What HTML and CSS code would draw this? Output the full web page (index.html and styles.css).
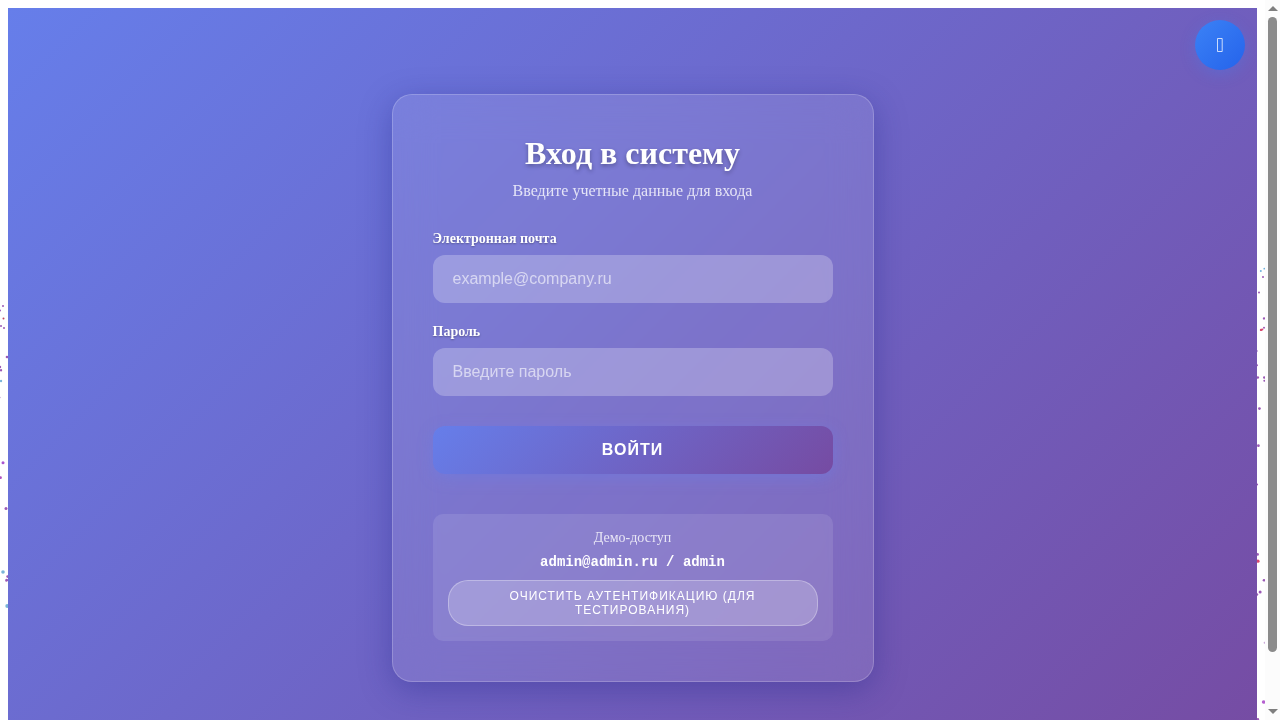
FILE: index.html
```html
<!DOCTYPE html>
<html lang="ru">
<head>
<meta charset="utf-8">
<meta name="viewport" content="width=device-width, initial-scale=1">
<title>Вход в систему</title>
<link rel="stylesheet" href="styles.css">
</head>
<body>
<svg class="particles particles-left" width="8" height="720" viewBox="0 0 8 720" aria-hidden="true">
  <g fill="#9b59b6">
    <circle cx="3" cy="306" r="1"/><circle cx="0" cy="310.5" r="1"/><circle cx="1" cy="326" r="1"/><circle cx="4" cy="328" r="1"/>
    <circle cx="7" cy="357" r="1.3"/><circle cx="0" cy="367" r="1.2"/><circle cx="1" cy="370.3" r="1.2"/>
    <circle cx="0" cy="397.5" r=".7" opacity=".6"/><circle cx="3" cy="462.7" r="1.5" fill="#a855d0"/><circle cx="0.5" cy="477.7" r="1.4" fill="#b052c0"/>
    <circle cx="6" cy="508.5" r="1.5"/><circle cx="7.6" cy="576.6" r="1.3"/><circle cx="6.6" cy="580.2" r="1.5"/>
  </g>
  <circle cx="3.5" cy="318.5" r="1" fill="#c0455f"/>
  <g fill="#7ab4d8"><circle cx="1" cy="381" r="1.2"/><circle cx="3" cy="572" r="1.8"/><circle cx="7.2" cy="606" r="1.9"/></g>
</svg>
<svg class="particles particles-right" width="8" height="720" viewBox="1257 0 8 720" aria-hidden="true">
  <g fill="#9b59b6">
    <circle cx="1263" cy="277" r="1"/><circle cx="1259" cy="292.6" r="1"/><circle cx="1264" cy="318.4" r="1.2"/><circle cx="1264" cy="327.8" r="1"/>
    <circle cx="1257" cy="351" r=".8"/><circle cx="1257" cy="365.3" r="1"/><circle cx="1257.8" cy="377.5" r="1.3"/><circle cx="1264.2" cy="377.5" r="1.2"/>
    <circle cx="1264.3" cy="380.7" r="1"/><circle cx="1259.4" cy="408.6" r="1.4"/><circle cx="1258.4" cy="445.7" r="1.4"/><circle cx="1257" cy="484.5" r="1.1"/>
    <circle cx="1257.6" cy="554.4" r="1.3"/><circle cx="1264" cy="580.2" r="1.3"/><circle cx="1260.1" cy="592" r="1.5"/><circle cx="1257" cy="594.5" r="1.2"/>
    <circle cx="1264.6" cy="642.8" r="1" opacity=".5"/><circle cx="1263.6" cy="702" r="1.8" fill="#b560d0"/><circle cx="1257.8" cy="719.4" r="1.4"/>
  </g>
  <g fill="#d9486f"><circle cx="1261" cy="329.9" r="1.2"/><circle cx="1262.3" cy="329.5" r="1.1"/><circle cx="1258" cy="561.2" r="1.6"/></g>
  <g fill="#6fb2dd"><circle cx="1260.8" cy="271" r="1"/><circle cx="1264.3" cy="268.7" r=".9"/></g>
</svg>

<button class="theme-toggle" type="button" aria-label="Сменить тему">
  <svg width="6" height="14" viewBox="0 0 6 14" aria-hidden="true">
    <path d="M.5 .5h4.7v13H.5z" fill="none" stroke="#fff" stroke-opacity=".75"/>
  </svg>
</button>

<main class="login-page">
  <section class="login-card">
    <header class="login-header">
      <h1>Вход в систему</h1>
      <p>Введите учетные данные для входа</p>
    </header>
    <form>
      <div class="form-group">
        <label for="email">Электронная почта</label>
        <input type="email" id="email" placeholder="example@company.ru">
      </div>
      <div class="form-group">
        <label for="password">Пароль</label>
        <input type="password" id="password" placeholder="Введите пароль">
      </div>
      <button class="login-button" type="button">Войти</button>
    </form>
    <div class="demo">
      <p class="demo-title">Демо-доступ</p>
      <p class="demo-credentials">admin@admin.ru / admin</p>
      <button class="clear-button" type="button">Очистить аутентификацию (для тестирования)</button>
    </div>
  </section>
</main>

<div class="scrollbar" aria-hidden="true">
  <svg width="10" height="5" viewBox="0 0 10 5"><path d="M0 5 5 0l5 5z" fill="#7f7f7f"/></svg>
  <div class="scrollbar-track"><div class="scrollbar-thumb"></div></div>
  <svg width="10" height="5" viewBox="0 0 10 5"><path d="M0 0h10L5 5z" fill="#7f7f7f"/></svg>
</div>
</body>
</html>
```

FILE: styles.css
```css
:root {
  --scrollbar-width: 15px;
}

html {
  scrollbar-width: none;
}

body {
  margin: 8px;
  padding-right: var(--scrollbar-width);
  background: #fff;
  font-family: "Liberation Serif", serif;
}

.particles {
  position: fixed;
  top: 0;
  z-index: -1;
}

.particles-left { left: 0; }
.particles-right { right: var(--scrollbar-width); }

.scrollbar {
  position: fixed;
  top: 0;
  right: 0;
  bottom: 0;
  z-index: 20;
  display: flex;
  flex-direction: column;
  align-items: center;
  gap: 6px;
  box-sizing: border-box;
  width: var(--scrollbar-width);
  padding: 6px 0;
  background: #fcfcfc;
}

.scrollbar-track {
  flex: 1;
  width: 9px;
}

.scrollbar-thumb {
  height: 92.5%;
  border-radius: 5px;
  background: #8b8b8b;
}

.theme-toggle {
  position: fixed;
  top: 20px;
  right: calc(20px + var(--scrollbar-width));
  z-index: 10;
  display: flex;
  align-items: center;
  justify-content: center;
  width: 50px;
  height: 50px;
  padding: 0;
  border: 0;
  border-radius: 50%;
  background: linear-gradient(135deg, #3b82f6, #2563eb);
  box-shadow: 0 4px 15px rgba(59, 130, 246, 0.3);
  color: #fff;
}

.login-page {
  display: flex;
  align-items: center;
  justify-content: center;
  min-height: 100vh;
  padding: 20px;
  background: linear-gradient(135deg, #667eea 0%, #764ba2 100%);
}

.login-card {
  width: 100%;
  max-width: 400px;
  padding: 40px;
  border: 1px solid rgba(255, 255, 255, 0.2);
  border-radius: 20px;
  background: rgba(255, 255, 255, 0.1);
  backdrop-filter: blur(20px);
  box-shadow: 0 8px 32px rgba(31, 38, 135, 0.37);
}

.login-header {
  margin-bottom: 30px;
  text-align: center;
}

.login-header h1 {
  margin: 0 0 10px;
  color: #fff;
  font-size: 32px;
  line-height: 37px;
  text-shadow: 0 2px 4px rgba(0, 0, 0, 0.3);
}

.login-header p {
  margin: 0;
  color: rgba(255, 255, 255, 0.8);
  font-size: 16px;
  line-height: 18px;
}

.form-group {
  margin-bottom: 20px;
}

.form-group label {
  display: block;
  margin-bottom: 8px;
  color: #fff;
  font-size: 14px;
  font-weight: 600;
  line-height: 17px;
  text-shadow: 0 1px 2px rgba(0, 0, 0, 0.3);
}

.form-group input {
  display: block;
  box-sizing: border-box;
  width: 100%;
  height: 48px;
  padding: 15px 20px;
  border: 0;
  border-radius: 12px;
  outline: 0;
  background: rgba(255, 255, 255, 0.25);
  color: #fff;
  font: 16px "Liberation Sans", sans-serif;
}

.form-group input::placeholder {
  color: rgba(255, 255, 255, 0.6);
}

.login-button {
  display: block;
  width: 100%;
  height: 48px;
  margin: 30px 0 40px;
  padding: 0;
  border: 0;
  border-radius: 12px;
  background: linear-gradient(135deg, #667eea 0%, #764ba2 100%);
  box-shadow: 0 4px 15px rgba(102, 126, 234, 0.4);
  color: #fff;
  font: 600 16px "Liberation Sans", sans-serif;
  letter-spacing: 1px;
  text-transform: uppercase;
}

.demo {
  padding: 15px;
  border-radius: 10px;
  background: rgba(255, 255, 255, 0.1);
  text-align: center;
}

.demo-title {
  margin: 0 0 8px;
  color: rgba(255, 255, 255, 0.8);
  font-size: 14px;
  line-height: 17px;
}

.demo-credentials {
  margin: 0 0 10px;
  color: #fff;
  font: bold 14px/16px "Liberation Mono", monospace;
}

.clear-button {
  width: 100%;
  padding: 8px 16px;
  border: 1px solid rgba(255, 255, 255, 0.3);
  border-radius: 20px;
  background: rgba(255, 255, 255, 0.2);
  color: #fff;
  font: 12px/14px "Liberation Sans", sans-serif;
  letter-spacing: 1px;
  text-transform: uppercase;
}
```
